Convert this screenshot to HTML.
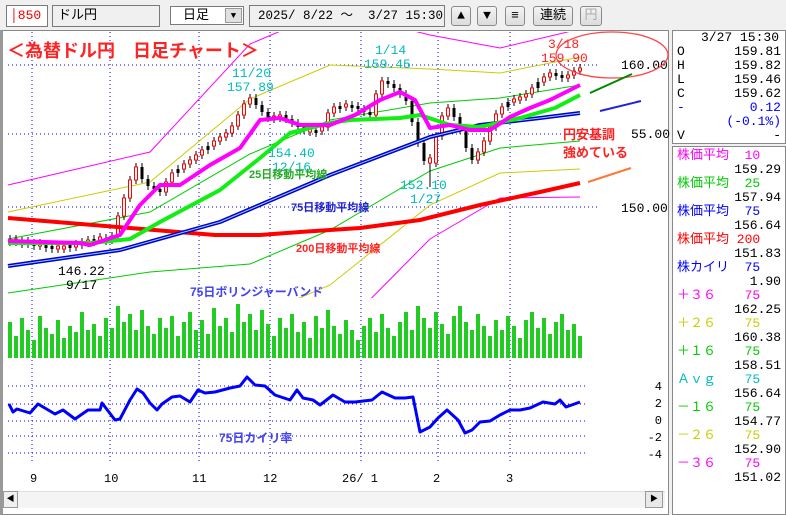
<!DOCTYPE html>
<html><head><meta charset="utf-8"><style>
*{margin:0;padding:0;box-sizing:border-box}
body{width:786px;height:515px;background:#f0f0f0;position:relative;overflow:hidden;font-family:"Liberation Mono","Noto Sans CJK JP",monospace;font-size:13px}
.b{position:absolute;border:1px solid #7a7a7a;background:#f0f0f0}
.btn{position:absolute;border:1px solid #8a8a8a;border-radius:3px;background:linear-gradient(#f4f4f4,#dcdcdc);text-align:center;font-size:13px;line-height:18px}
.rp{position:absolute;background:#fff;border:1px solid #888}
.r{position:absolute;right:4px;white-space:pre;line-height:14px}
.l{position:absolute;left:4px;white-space:pre;line-height:14px}
.u{fill:#fff;stroke:#f00;stroke-width:1}
.d{fill:#000}
text{font-family:"Liberation Mono","Noto Sans CJK JP",monospace;font-size:13px}
.g{font-family:"Liberation Sans","Noto Sans CJK JP",sans-serif;font-weight:bold}
</style></head><body>
<div class="b" style="left:6px;top:5px;width:42px;height:22px;background:#fff;color:#e00;line-height:20px;padding-left:3px">│850</div>
<div class="b" style="left:52px;top:5px;width:108px;height:22px;line-height:20px;padding-left:5px">ドル円</div>
<div class="b" style="left:170px;top:6px;width:74px;height:19px;background:#fff;line-height:17px;padding-left:12px">日足<span style="position:absolute;right:1px;top:1px;width:17px;height:15px;background:#e0e0e0;border:1px solid #999;font-size:9px;line-height:14px;text-align:center">▼</span></div>
<div class="b" style="left:249px;top:5px;width:196px;height:22px;line-height:20px;padding-left:8px;white-space:pre;font-size:12.5px">2025/ 8/22 ～  3/27 15:30</div>
<div class="btn" style="left:451px;top:6px;width:20px;height:20px">▲</div>
<div class="btn" style="left:477px;top:6px;width:20px;height:20px">▼</div>
<div class="btn" style="left:505px;top:6px;width:20px;height:20px">≡</div>
<div class="btn" style="left:533px;top:6px;width:40px;height:20px">連続</div>
<div class="btn" style="left:580px;top:6px;width:22px;height:20px;color:#aaa">円</div>

<div style="position:absolute;left:0;top:30px;width:669px;height:485px;background:#fff;border:1px solid #888;border-left:3px solid #999"></div>
<svg style="position:absolute;left:0;top:0" width="670" height="515">
<defs><clipPath id="cp"><rect x="4" y="32" width="660" height="266"/></clipPath></defs>
<g stroke="#00f" stroke-dasharray="1,3" stroke-width="1">
<path d="M32 32V462M110 32V462M199 32V462M270 32V462M361 32V462M438 32V462M510 32V462"/>
<path d="M8 65H600M8 134H600M8 207H600M8 386H585M8 404H585M8 421H585M8 436H585M8 453H585"/>
</g>
<g clip-path="url(#cp)" fill="none" stroke-width="1">
<polyline stroke="#f0f" points="8,185 150,152 250,44 330,10 430,35 500,48 580,29"/>
<polyline stroke="#f0f" points="8,347 150,332 250,374 330,340 430,239 500,198 580,197"/>
<polyline stroke="#cc0" points="8,212 150,182 250,99 330,65 430,69 500,73 580,57"/>
<polyline stroke="#cc0" points="8,320 150,302 250,319 330,285 430,205 500,173 580,169"/>
<polyline stroke="#0c0" points="8,239 150,212 250,154 330,120 430,103 500,98 580,85"/>
<polyline stroke="#0c0" points="8,293 150,272 250,264 330,230 430,171 500,148 580,141"/>
</g>
<path stroke="#2c2" stroke-width="4" d="M10 358V322M16 358V336M22 358V318M28 358V330M34 358V340M40 358V316M46 358V328M52 358V334M58 358V320M64 358V338M70 358V326M76 358V332M82 358V312M88 358V330M94 358V324M100 358V336M106 358V318M112 358V328M118 358V306M124 358V322M130 358V314M136 358V330M142 358V310M148 358V326M154 358V334M160 358V318M166 358V328M172 358V316M178 358V336M184 358V322M190 358V312M196 358V330M202 358V320M208 358V334M214 358V308M220 358V326M226 358V318M232 358V332M238 358V304M244 358V322M250 358V314M256 358V330M262 358V310M268 358V324M274 358V336M280 358V318M286 358V328M292 358V314M298 358V332M304 358V322M310 358V338M316 358V316M322 358V328M328 358V310M334 358V326M340 358V334M346 358V320M352 358V330M358 358V340M364 358V326M370 358V318M376 358V332M382 358V314M388 358V328M394 358V336M400 358V322M406 358V312M412 358V330M418 358V306M424 358V318M430 358V328M436 358V312M442 358V324M448 358V334M454 358V316M460 358V306M466 358V322M472 358V330M478 358V314M484 358V326M490 358V336M496 358V320M502 358V330M508 358V316M514 358V326M520 358V338M526 358V320M532 358V312M538 358V328M544 358V318M550 358V334M556 358V322M562 358V314M568 358V330M574 358V324M580 358V336"/>
<path stroke="#000" stroke-width="1" d="M10 235V246M16 235V246M22 237V248M28 237V248M34 239V250M40 239V250M46 241V252M52 242V253M58 242V253M64 242V253M70 241V252M76 240V251M82 238V249M88 236V247M94 235V246M100 233V244M106 234V245M112 232V244M118 212V240M124 194V220M130 176V202M136 163V184M142 163V183M148 175V190M154 182V193M160 185V196M166 178V196M172 169V186M178 165V177M184 160V173M190 156V168M196 151V164M202 146V159M208 142V154M214 137V150M220 133V145M226 129V141M232 122V137M238 111V130M244 100V119M250 94V108M256 94V109M262 101V116M268 108V122M274 112V123M280 111V122M286 111V123M292 115V127M298 119V131M304 123V134M310 125V136M316 126V137M322 123V135M328 109V131M334 103V117M340 102V113M346 100V111M352 101V112M358 102V113M364 105V116M370 108V119M376 90V119M382 77V98M388 77V88M394 80V92M400 84V98M406 90V105M412 97V126M418 118V147M424 139V165M430 154V187M436 132V167M442 112V140M448 104V120M454 104V121M460 113V134M466 126V152M472 144V164M478 148V164M484 137V156M490 123V145M496 110V131M502 103V118M508 98V111M514 95V106M520 93V104M526 90V101M532 84V98M538 78V92M544 73V86M550 69V81M556 69V80M562 71V82M568 71V82M574 67V79M580 64V75"/>
<rect class="d" x="8.5" y="239" width="3" height="3"/><rect class="u" x="14.5" y="239" width="3" height="3"/><rect class="d" x="20.5" y="241" width="3" height="3"/><rect class="u" x="26.5" y="241" width="3" height="3"/><rect class="d" x="32.5" y="243" width="3" height="3"/><rect class="u" x="38.5" y="243" width="3" height="3"/><rect class="d" x="44.5" y="245" width="3" height="3"/><rect class="d" x="50.5" y="246" width="3" height="3"/><rect class="u" x="56.5" y="246" width="3" height="3"/><rect class="u" x="62.5" y="246" width="3" height="3"/><rect class="d" x="68.5" y="245" width="3" height="3"/><rect class="u" x="74.5" y="244" width="3" height="3"/><rect class="u" x="80.5" y="242" width="3" height="3"/><rect class="u" x="86.5" y="240" width="3" height="3"/><rect class="d" x="92.5" y="239" width="3" height="3"/><rect class="u" x="98.5" y="237" width="3" height="3"/><rect class="d" x="104.5" y="238" width="3" height="3"/><rect class="u" x="110.5" y="236" width="3" height="4"/><rect class="u" x="116.5" y="216" width="3" height="20"/><rect class="u" x="122.5" y="198" width="3" height="18"/><rect class="u" x="128.5" y="180" width="3" height="18"/><rect class="u" x="134.5" y="167" width="3" height="13"/><rect class="d" x="140.5" y="167" width="3" height="12"/><rect class="d" x="146.5" y="179" width="3" height="7"/><rect class="d" x="152.5" y="186" width="3" height="3"/><rect class="d" x="158.5" y="189" width="3" height="3"/><rect class="u" x="164.5" y="182" width="3" height="10"/><rect class="u" x="170.5" y="173" width="3" height="9"/><rect class="d" x="176.5" y="169" width="3" height="4"/><rect class="u" x="182.5" y="164" width="3" height="5"/><rect class="u" x="188.5" y="160" width="3" height="4"/><rect class="u" x="194.5" y="155" width="3" height="5"/><rect class="u" x="200.5" y="150" width="3" height="5"/><rect class="d" x="206.5" y="146" width="3" height="4"/><rect class="u" x="212.5" y="141" width="3" height="5"/><rect class="u" x="218.5" y="137" width="3" height="4"/><rect class="u" x="224.5" y="133" width="3" height="4"/><rect class="u" x="230.5" y="126" width="3" height="7"/><rect class="u" x="236.5" y="115" width="3" height="11"/><rect class="u" x="242.5" y="104" width="3" height="11"/><rect class="u" x="248.5" y="98" width="3" height="6"/><rect class="d" x="254.5" y="98" width="3" height="7"/><rect class="d" x="260.5" y="105" width="3" height="7"/><rect class="d" x="266.5" y="112" width="3" height="6"/><rect class="u" x="272.5" y="116" width="3" height="3"/><rect class="u" x="278.5" y="115" width="3" height="3"/><rect class="d" x="284.5" y="115" width="3" height="4"/><rect class="d" x="290.5" y="119" width="3" height="4"/><rect class="d" x="296.5" y="123" width="3" height="4"/><rect class="d" x="302.5" y="127" width="3" height="3"/><rect class="u" x="308.5" y="129" width="3" height="3"/><rect class="d" x="314.5" y="130" width="3" height="3"/><rect class="u" x="320.5" y="127" width="3" height="4"/><rect class="u" x="326.5" y="113" width="3" height="14"/><rect class="u" x="332.5" y="107" width="3" height="6"/><rect class="d" x="338.5" y="106" width="3" height="3"/><rect class="u" x="344.5" y="104" width="3" height="3"/><rect class="d" x="350.5" y="105" width="3" height="3"/><rect class="d" x="356.5" y="106" width="3" height="3"/><rect class="d" x="362.5" y="109" width="3" height="3"/><rect class="d" x="368.5" y="112" width="3" height="3"/><rect class="u" x="374.5" y="94" width="3" height="21"/><rect class="u" x="380.5" y="81" width="3" height="13"/><rect class="d" x="386.5" y="81" width="3" height="3"/><rect class="d" x="392.5" y="84" width="3" height="4"/><rect class="d" x="398.5" y="88" width="3" height="6"/><rect class="d" x="404.5" y="94" width="3" height="7"/><rect class="d" x="410.5" y="101" width="3" height="21"/><rect class="d" x="416.5" y="122" width="3" height="21"/><rect class="d" x="422.5" y="143" width="3" height="18"/><rect class="u" x="428.5" y="158" width="3" height="5"/><rect class="u" x="434.5" y="136" width="3" height="27"/><rect class="u" x="440.5" y="116" width="3" height="20"/><rect class="u" x="446.5" y="108" width="3" height="8"/><rect class="d" x="452.5" y="108" width="3" height="9"/><rect class="d" x="458.5" y="117" width="3" height="13"/><rect class="d" x="464.5" y="130" width="3" height="18"/><rect class="d" x="470.5" y="148" width="3" height="12"/><rect class="u" x="476.5" y="152" width="3" height="8"/><rect class="u" x="482.5" y="141" width="3" height="11"/><rect class="u" x="488.5" y="127" width="3" height="14"/><rect class="u" x="494.5" y="114" width="3" height="13"/><rect class="u" x="500.5" y="107" width="3" height="7"/><rect class="d" x="506.5" y="102" width="3" height="5"/><rect class="u" x="512.5" y="99" width="3" height="3"/><rect class="u" x="518.5" y="97" width="3" height="3"/><rect class="u" x="524.5" y="94" width="3" height="3"/><rect class="u" x="530.5" y="88" width="3" height="6"/><rect class="d" x="536.5" y="82" width="3" height="6"/><rect class="u" x="542.5" y="77" width="3" height="5"/><rect class="u" x="548.5" y="73" width="3" height="4"/><rect class="d" x="554.5" y="73" width="3" height="3"/><rect class="d" x="560.5" y="75" width="3" height="3"/><rect class="u" x="566.5" y="75" width="3" height="3"/><rect class="u" x="572.5" y="71" width="3" height="4"/><rect class="u" x="578.5" y="68" width="3" height="3"/>
<g fill="none" stroke-linejoin="round">
<polyline stroke="#f00" stroke-width="4" points="8,218 130,228 215,235 260,235 300,232 360,228 420,220 480,205 540,192 580,183"/>
<polyline stroke="#00c" stroke-width="4" points="8,266 120,250 220,222 330,175 430,137 480,125 540,118 580,113"/>
<polyline stroke="#9cf" stroke-width="1" points="8,266 120,250 220,222 330,175 430,137 480,125 540,118 580,113"/>
<polyline stroke="#1e1" stroke-width="4" points="8,243 90,243 130,239 160,222 220,190 260,158 290,133 330,123 350,120 400,118 420,115 450,125 480,127 520,118 555,108 580,95"/>
<polyline stroke="#f0f" stroke-width="4" points="8,241 80,243 90,245 120,235 140,205 160,185 180,185 210,165 240,148 260,120 280,118 300,125 330,125 355,115 380,100 400,92 415,100 430,128 450,125 470,130 490,130 510,117 530,108 550,100 570,90 580,85"/>
<polyline stroke="#00f" stroke-width="3" points="9,404 13,412 17,409 30,413 38,404 55,414 63,410 75,419 88,410 100,410 102,403 115,420 120,419 130,400 137,389 143,393 150,403 157,410 162,404 172,397 180,396 190,402 198,390 205,393 215,392 230,388 240,386 247,377 255,385 265,386 275,395 290,400 297,390 303,398 313,400 320,405 333,395 345,402 355,402 372,400 382,392 395,398 405,398 413,397 420,432 430,427 438,418 447,410 458,420 465,433 472,430 480,422 490,421 500,415 510,410 520,410 530,408 543,402 555,404 560,400 566,407 580,402"/>
</g>
<text class="g" x="7" y="57" fill="#f22" style="font-size:18px">＜為替ドル円　日足チャート＞</text>
<text x="232" y="77" fill="#0bb">11/20</text><text x="227" y="91" fill="#0bb">157.89</text>
<text x="375" y="54" fill="#0bb">1/14</text><text x="364" y="68" fill="#0bb">159.45</text>
<text x="548" y="48" fill="#f22">3/18</text><text x="541" y="62" fill="#f22">159.90</text>
<text x="268" y="157" fill="#0bb">154.40</text><text x="272" y="171" fill="#0bb">12/16</text>
<text x="400" y="189" fill="#0bb">152.10</text><text x="410" y="203" fill="#0bb">1/27</text>
<text x="58" y="275" fill="#000">146.22</text><text x="66" y="289" fill="#000">9/17</text>
<text class="g" x="249" y="178" fill="#2a2" style="font-size:11px">25日移動平均線</text>
<text class="g" x="291" y="211" fill="#22c" style="font-size:11px">75日移動平均線</text>
<text class="g" x="296" y="252" fill="#f22" style="font-size:11px">200日移動平均線</text>
<text class="g" x="190" y="296" fill="#44e" style="font-size:12px">75日ボリンジャーバンド</text>
<text class="g" x="563" y="139" fill="#f22">円安基調</text><text class="g" x="563" y="157" fill="#f22">強めている</text>
<text class="g" x="219" y="442" fill="#44e" style="font-size:12px">75日カイリ率</text>
<text x="621" y="69">160.00</text><text x="631" y="138">55.00</text><text x="621" y="212">150.00</text>
<ellipse cx="612" cy="55" rx="56" ry="23" fill="none" stroke="#f44" stroke-width="1.3"/>
<line x1="590" y1="93" x2="632" y2="74" stroke="#080" stroke-width="2"/>
<line x1="600" y1="111" x2="641" y2="101" stroke="#22d" stroke-width="2"/>
<line x1="588" y1="182" x2="631" y2="168" stroke="#f73" stroke-width="2"/>
<g text-anchor="end"><text x="662" y="390" style="font-size:12px">4</text><text x="662" y="407" style="font-size:12px">2</text><text x="662" y="424" style="font-size:12px">0</text><text x="662" y="441" style="font-size:12px">-2</text><text x="662" y="458" style="font-size:12px">-4</text></g>
<g><text x="30" y="482" style="font-size:12px">9</text><text x="104" y="482" style="font-size:12px">10</text><text x="192" y="482" style="font-size:12px">11</text><text x="263" y="482" style="font-size:12px">12</text><text x="342" y="482" style="font-size:12px">26/ 1</text><text x="433" y="482" style="font-size:12px">2</text><text x="506" y="482" style="font-size:12px">3</text></g>
</svg>
<div style="position:absolute;left:3px;top:491px;width:662px;height:17px;background:#f4f4f4;border-top:1px solid #ddd"></div>
<div style="position:absolute;left:3px;top:491px;width:15px;height:17px;background:#f0f0f0;border:1px solid #999;font-size:8px;line-height:15px;text-align:center">◀</div>
<div style="position:absolute;left:645px;top:491px;width:18px;height:17px;background:#e8e8e8;border:1px solid #999;font-size:8px;line-height:15px;text-align:center">▶</div>

<div class="rp" style="left:672px;top:30px;width:114px;height:114px">
<div style="position:absolute;left:28px;top:0;white-space:pre;line-height:14px">3/27 15:30</div>
<div class="l" style="top:14px">O</div><div class="r" style="top:14px">159.81</div>
<div class="l" style="top:28px">H</div><div class="r" style="top:28px">159.82</div>
<div class="l" style="top:42px">L</div><div class="r" style="top:42px">159.46</div>
<div class="l" style="top:56px">C</div><div class="r" style="top:56px">159.62</div>
<div class="l" style="top:70px;color:#00f">-</div><div class="r" style="top:70px;color:#00f">0.12</div>
<div class="r" style="top:84px;color:#00f">(-0.1%)</div>
<div class="l" style="top:98px">V</div><div class="r" style="top:98px">-</div>
</div>
<div class="rp" style="left:672px;top:146px;width:114px;height:369px">
<div class="l" style="top:2px;color:#f0f">株価平均  10</div><div class="r" style="top:16px">159.29</div>
<div class="l" style="top:30px;color:#0c0">株価平均  25</div><div class="r" style="top:44px">157.94</div>
<div class="l" style="top:58px;color:#00f">株価平均  75</div><div class="r" style="top:72px">156.64</div>
<div class="l" style="top:86px;color:#f00">株価平均 200</div><div class="r" style="top:100px">151.83</div>
<div class="l" style="top:114px;color:#00f">株カイリ  75</div><div class="r" style="top:128px">1.90</div>
<div class="l" style="top:142px;color:#f0f">＋３６　  75</div><div class="r" style="top:156px">162.25</div>
<div class="l" style="top:170px;color:#cc0">＋２６　  75</div><div class="r" style="top:184px">160.38</div>
<div class="l" style="top:198px;color:#0c0">＋１６　  75</div><div class="r" style="top:212px">158.51</div>
<div class="l" style="top:226px;color:#0bb">Ａｖｇ　  75</div><div class="r" style="top:240px">156.64</div>
<div class="l" style="top:254px;color:#0c0">－１６　  75</div><div class="r" style="top:268px">154.77</div>
<div class="l" style="top:282px;color:#cc0">－２６　  75</div><div class="r" style="top:296px">152.90</div>
<div class="l" style="top:310px;color:#f0f">－３６　  75</div><div class="r" style="top:324px">151.02</div>
</div>
</body></html>
